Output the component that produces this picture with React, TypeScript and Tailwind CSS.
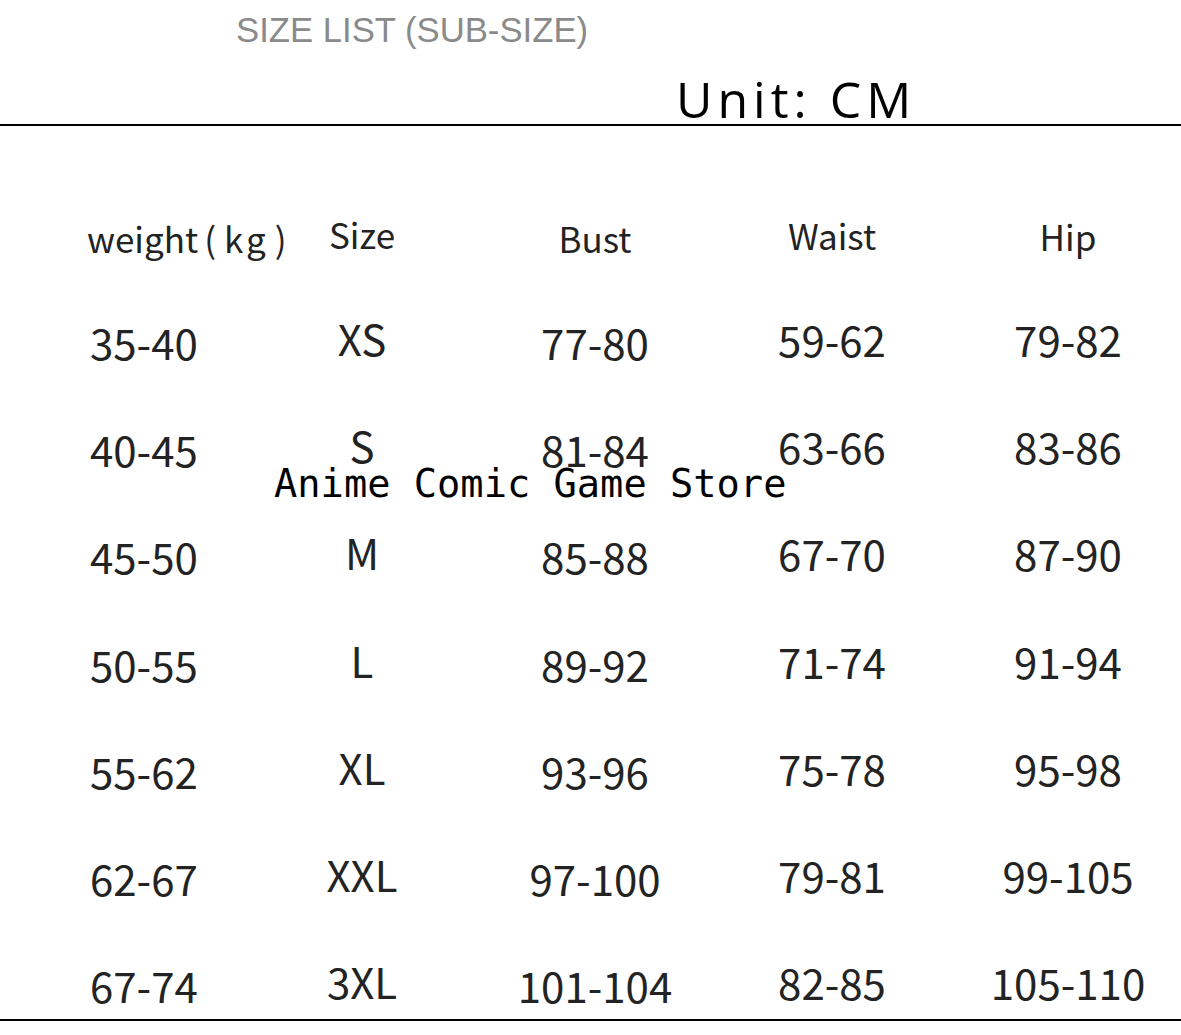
import React from 'react';

const rows = [
  ['35-40', 'XS', '77-80', '59-62', '79-82'],
  ['40-45', 'S', '81-84', '63-66', '83-86'],
  ['45-50', 'M', '85-88', '67-70', '87-90'],
  ['50-55', 'L', '89-92', '71-74', '91-94'],
  ['55-62', 'XL', '93-96', '75-78', '95-98'],
  ['62-67', 'XXL', '97-100', '79-81', '99-105'],
  ['67-74', '3XL', '101-104', '82-85', '105-110'],
];

// per column: alignment + small vertical nudge taken from the picture
const cellClass = [
  'pl-[90px] text-left pt-[7px]',
  'text-center pt-[3px]',
  'text-center pt-[7px]',
  'text-center pt-[4px]',
  'text-center pt-[4px]',
];

const cjk = { fontFamily: '"Noto Sans CJK SC", "Noto Sans", sans-serif' };

const App: React.FC = () => {
  return (
    <div className="relative w-[1181px] h-[1035px] overflow-hidden bg-white">
      {/* title */}
      <div
        className="pt-[13px] pl-[236px] text-[34.7px] leading-none text-[#8a8a8a] whitespace-nowrap"
        style={{ fontFamily: '"Liberation Sans", Arial, sans-serif' }}
      >
        SIZE LIST (SUB-SIZE)
      </div>
      <div
        className="mt-[26px] pl-[676px] text-[50px] leading-none tracking-[5px] text-black whitespace-nowrap"
        style={{ fontFamily: '"Open Sans", "Noto Sans", sans-serif' }}
      >
        Unit: CM
      </div>
      <div className="h-[2px] bg-black" />

      {/* table */}
      <div className="mt-[83px] text-[#232323]" style={cjk}>
        <div className="grid grid-cols-[240px_244px_222px_252px_220px] h-[105px] text-[35px] leading-none whitespace-nowrap">
          <div className="pl-[87px] pt-[11px]">
            weight
            <span className="ml-[6px] mr-[8px]">(</span>
            <span className="tracking-[3px]">kg</span>
            <span className="ml-[6px]">)</span>
          </div>
          <div className="text-center pt-[7px]">Size</div>
          <div className="text-center pt-[11px]">Bust</div>
          <div className="text-center pt-[8px]">Waist</div>
          <div className="text-center pt-[9px]">Hip</div>
        </div>
        {rows.map((r, i) => (
          <div
            key={i}
            className={
              'grid grid-cols-[240px_244px_222px_252px_220px] text-[42px] leading-none whitespace-nowrap ' +
              (i === rows.length - 1 ? 'h-[62px]' : 'h-[107.3px]')
            }
          >
            {r.map((v, j) => (
              <div key={j} className={cellClass[j]}>
                {v}
              </div>
            ))}
          </div>
        ))}
        <div className="h-[2px] bg-black" />
      </div>

      {/* watermark */}
      <div
        className="absolute left-[274px] top-[465px] text-[38.7px] leading-none text-black whitespace-pre"
        style={{ fontFamily: '"DejaVu Sans Mono", "Liberation Mono", monospace' }}
      >
        Anime Comic Game Store
      </div>
    </div>
  );
};

export default App;
